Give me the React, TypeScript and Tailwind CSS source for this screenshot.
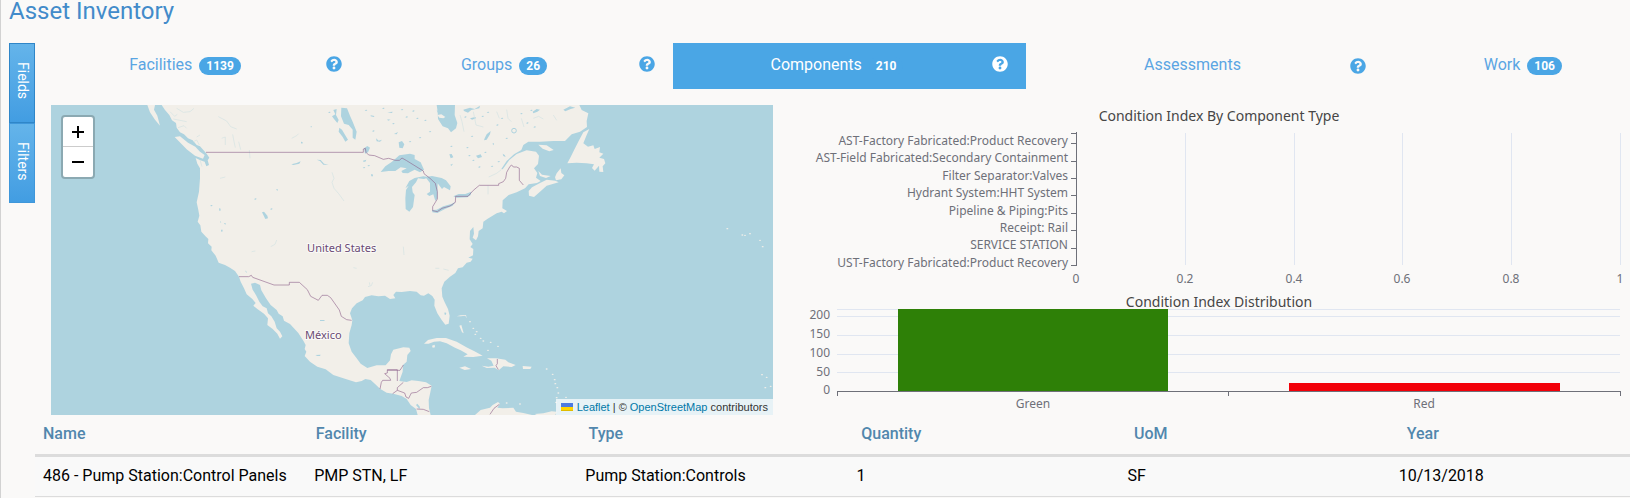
import { FaQuestionCircle } from "react-icons/fa";

const tabs = [
  { label: "Facilities", count: 1139, width: "flex-[325_1_0%] justify-center", link: "mr-[25px]", icon: "top-[13px]" },
  { label: "Groups", count: 26, width: "flex-[313_1_0%] justify-center", link: "mr-[25px]", icon: "top-[13px]" },
  { label: "Components", count: 210, width: "flex-[353_1_0%] justify-center", link: "mr-[25px]", icon: "top-[13px]", active: true },
  { label: "Assessments", width: "flex-[358_1_0%] justify-center", link: "mr-[25px]", icon: "top-[15px]" },
  { label: "Work", count: 106, width: "flex-[246_1_0%] justify-end", link: "mr-[68px]" },
];

const land = [
  // North America
  "M365,30 375,45 388,60 396,76 408,84 410,98 420,112 432,118 444,130 458,136 470,150 480,154 490,165 500,176 508,188 503,196 507,210 499,214 494,200 481,196 467,189 472,206 480,220 480,250 477,290 470,322 475,345 478,362 473,380 481,391 484,410 498,425 505,432 504,445 515,455 514,466 527,482 536,503 555,510 570,518 585,528 597,545 602,560 612,580 620,598 637,612 647,624 640,632 652,642 672,656 684,670 682,690 698,702 712,716 720,731 727,724 720,710 710,700 704,680 694,664 684,655 680,640 668,634 658,620 649,602 638,584 633,566 645,563 660,570 664,586 678,610 692,630 710,645 716,656 728,664 732,677 750,687 775,714 790,737 797,750 794,762 799,770 794,783 810,800 832,815 857,823 880,840 910,850 948,862 965,858 976,852 992,855 1006,868 1020,881 1040,893 1060,896 1085,903 1100,912 1112,930 1128,942 1133,960 1172,960 1167,940 1166,915 1171,892 1175,872 1158,862 1135,858 1115,856 1100,861 1078,858 1088,830 1089,810 1100,800 1102,780 1112,768 1108,758 1090,757 1060,764 1053,778 1050,796 1037,811 1010,811 982,819 962,806 950,790 935,770 926,745 928,715 935,690 937,676 930,655 936,640 950,625 968,616 975,606 995,601 1015,604 1035,602 1050,612 1066,610 1060,600 1068,590 1085,591 1110,588 1130,590 1142,601 1152,602 1165,595 1177,603 1184,614 1183,632 1192,655 1205,675 1216,689 1226,686 1229,662 1224,642 1214,622 1207,605 1205,580 1213,560 1230,545 1246,534 1254,520 1268,517 1280,503 1292,500 1298,491 1285,488 1299,481 1300,462 1291,456 1298,447 1289,433 1290,408 1300,396 1302,416 1298,428 1308,436 1314,424 1316,408 1328,400 1330,380 1343,371 1370,355 1385,350 1392,355 1401,348 1387,340 1388,316 1406,300 1430,292 1455,280 1466,268 1491,264 1502,258 1488,248 1492,234 1482,220 1494,207 1497,182 1488,170 1460,166 1430,177 1408,195 1388,223 1384,222 1400,198 1422,178 1444,165 1450,150 1465,140 1500,140 1540,138 1575,138 1595,118 1620,110 1641,96 1640,78 1645,55 1625,45 1618,30 1245,30 1244,60 1252,84 1248,100 1233,112 1224,100 1208,94 1194,72 1193,50 1190,30Z",
  // Nova Scotia, Cape Breton, Prince Edward Island
  "M1466,288 1476,277 1500,264 1520,254 1546,257 1556,262 1520,272 1500,290 1482,306 1467,302Z",
  "M1545,247 1550,235 1562,220 1564,234 1573,241 1564,253 1548,256Z",
  "M1495,228 1506,239 1532,243 1518,249 1500,243Z",
  // Newfoundland, Anticosti
  "M1582,205 1592,186 1602,166 1616,138 1630,112 1648,102 1640,120 1630,145 1644,155 1660,151 1664,162 1680,156 1678,172 1690,176 1678,188 1692,192 1696,205 1688,214 1690,231 1678,230 1677,212 1664,227 1656,219 1662,208 1640,205 1610,203Z",
  "M1495,149 1520,151 1541,165 1528,169 1508,161Z",
  // Vancouver Island, Haida Gwaii
  "M404,126 420,124 444,143 466,155 480,170 494,180 489,191 465,182 440,163 418,140Z",
  "M322,30 345,30 342,44 352,62 360,92 345,74 330,52Z",
  // Cuba, Hispaniola, Jamaica, Puerto Rico
  "M1152,746 1164,735 1190,729 1218,729 1250,740 1282,758 1302,768 1328,782 1300,786 1270,785 1283,778 1262,766 1245,758 1220,745 1200,739 1182,740 1166,746Z",
  "M1325,812 1345,815 1361,812 1354,797 1341,790 1368,790 1396,794 1405,802 1427,810 1415,816 1390,814 1376,826 1364,818 1340,819Z",
  "M1258,818 1275,814 1293,822 1274,825Z",
  "M1448,813 1475,815 1471,822 1449,822Z",
  "M1176,752 1184,749 1185,757 1178,758Z",
  // Bahamas
  "M1258,692 1264,690 1271,715 1266,712Z M1250,664 1262,661 1278,660 1280,670 1276,662 1262,664Z",
  // South America
  "M1305,960 1322,945 1350,938 1358,930 1374,921 1380,926 1372,938 1388,940 1420,938 1428,950 1450,954 1476,960Z",
  "M1484,957 1510,955 1535,949 1550,950 1546,960 1490,960Z",
];

const water = [
  // Great Lakes
  "M1022,231 1036,214 1056,200 1078,181 1110,176 1124,180 1124,192 1142,202 1152,224 1140,232 1124,224 1112,230 1104,235 1088,234 1084,228 1100,220 1082,217 1066,228 1046,228Z",
  "M1096,310 1098,285 1106,272 1096,280 1108,258 1124,249 1150,244 1168,247 1152,252 1134,250 1128,262 1116,276 1118,292 1124,300 1119,336 1108,350 1097,342Z",
  "M1156,246 1176,243 1205,249 1218,256 1232,274 1230,286 1212,276 1206,282 1193,265 1192,310 1186,318 1180,298 1168,303 1160,297 1170,290 1170,264Z",
  "M1176,345 1190,344 1210,334 1236,326 1246,320 1238,332 1215,342 1192,354 1177,352Z",
  "M1240,304 1256,297 1276,297 1294,290 1292,300 1282,307 1250,308Z",
  // Manitoba
  "M904,38 921,40 930,62 938,80 950,110 946,134 938,128 938,104 926,90 912,86 903,64Z",
  "M880,45 890,42 888,60 896,75 892,84 882,72 876,64 886,58Z",
  "M898,98 906,104 914,118 924,134 916,140 908,126 896,110Z",
  "M1076,142 1086,138 1093,148 1088,160 1078,158Z",
  "M972,160 982,153 990,158 984,172 975,176Z",
  // Great Salt Lake and other inland water
  "M666,352 672,350 682,362 684,370 676,372Z",
  "M537,340 542,341 541,348 538,347Z M552,384 557,384 556,390Z M543,404 548,404 547,410 544,410Z M708,283 714,283 712,288Z M614,526 620,530 620,534Z M540,379 544,381 541,383Z",
  "M826,780 842,779 840,783 832,783Z M840,675 854,675 853,678 840,678Z",
  "M1214,652 1219,654 1217,660 1213,658Z",
  "M1334,130 1340,118 1352,108 1350,118 1340,134 1332,136Z M1308,182 1322,178 1326,186 1314,190Z",
  "M1228,178 1235,177 1240,187 1232,190Z M1231,209 1239,206 1234,213Z M1388,176 1394,180 1397,186 1390,183Z M1357,146 1362,144 1361,151Z",
  "M1270,44 1290,38 1304,42 1320,32 1318,40 1294,45 1284,53 1272,48Z M1290,70 1306,66 1308,70 1296,74Z M1478,50 1490,42 1500,44 1492,50 1480,55Z M1570,44 1590,34 1606,38 1592,42 1576,49Z",
  "M992,61 1003,63 1002,66 992,64Z M1042,52 1058,50 1056,54Z M1008,130 1016,137 1026,134 1020,140 1010,139Z M1062,117 1074,111 1070,118Z M969,197 979,194 976,200 970,200Z M993,238 998,238 999,244 994,244Z M1042,73 1052,74 1044,77Z",
  "M754,208 770,204 782,199 778,206 760,210Z M830,194 842,195 852,206 866,209 850,209 840,198Z M783,140 788,141 787,146 783,145Z M812,94 815,93 815,97 812,97Z",
  // Lake Nicaragua
  "M1128,930 1132,926 1140,936 1138,942Z",
];

const creeks = [
  "M414,98 432,92 440,100 M390,50 404,64 412,58 M410,40 430,52 450,50 462,40 M400,72 440,80 M460,140 470,135 478,150 M470,126 480,120",
  "M535,65 560,78 572,95 590,102 M545,130 556,126 556,150 M578,118 582,140 586,158 M596,140 602,164 M628,165 630,190",
  "M755,130 770,122 776,116 M876,232 882,250 876,262 882,280 896,296 912,318 M692,455 705,448 710,435 M635,470 646,468",
  "M480,195 486,215 M540,250 556,246 M1090,455 1092,480 M984,575 994,572 998,562 M988,562 990,572 M940,518 950,520",
  "M1344,272 1344,298 M1346,246 1370,235 1384,224 M1186,520 1198,520 M1210,522 1226,526",
  "M1260,60 1266,80 1272,110 M1300,50 1308,90 1330,96 M1400,44 1404,70 1414,80 M1444,70 1452,96 M1370,50 1378,70 M1480,70 1496,64 1510,72 M1540,60 1550,76",
];

const lakes: [number, number][] = [
  [1120, 48], [1132, 70], [1100, 66], [1156, 76], [1170, 110], [1140, 128], [1086, 44], [1110, 140],
  [1276, 66], [1296, 124], [1328, 64], [1344, 52], [1372, 90], [1386, 70], [1400, 130],
  [1234, 154], [1282, 158], [1300, 196], [1336, 172], [1376, 200], [1288, 182],
  [1444, 56], [1462, 84], [1474, 46], [1484, 96], [1356, 214], [1318, 216],
  [1000, 108], [978, 46], [1030, 40], [1060, 86], [986, 212], [972, 218], [868, 52], [646, 312], [514, 332], [694, 342],
];

const borders = [
  "M498,172H970V162L976,160 978,172 986,180 1004,182 1030,193 1046,190 1066,196 1078,196 1086,189 1100,197 1150,228 1152,236 1170,250 1186,265 1192,290 1192,312 1178,335 1178,347 1192,350 1206,340 1230,333 1246,322 1247,304H1284L1300,286 1318,271H1376V266L1390,260 1397,250 1400,232 1410,214 1415,210 1420,216H1430L1438,220V256L1450,270",
  "M597,545H626L634,541 638,547 702,570H748V562H778L802,584 812,604 835,616 846,601H862L872,608 898,645 904,664 920,674 935,676",
  "M1020,882 1024,862 1028,856H1052L1050,850 1034,836 1042,834V824H1072V858 M1042,826H1080L1090,810 M1090,862 1072,878 1072,886 1058,896 M1072,886 1094,894 1098,906 1106,910 1114,894 1130,892 1150,878H1162L1174,874 M1130,942 1150,943 1168,950",
  "M1372,792V806L1368,812 1375,824 M1378,928 1362,940 1350,958",
];

const islets: [number, number][] = [
  [2062, 401], [2107, 420], [2115, 421], [2130, 416], [2160, 436], [2168, 455], [2166, 839], [2180, 847], [2176, 878], [2192, 874],
  [1520, 822], [1538, 838], [1544, 854], [1546, 866], [1552, 878], [1555, 894], [1550, 908], [1548, 922], [1578, 907],
  [1300, 700], [1310, 710], [1322, 730], [1330, 738], [1352, 742], [1374, 754], [1344, 766],
  [1290, 680], [1306, 718], [1400, 924], [1440, 927],
];

function MapPanel() {
  return (
    <section aria-label="Asset map" className="relative h-[310px] min-w-0 flex-[722_1_0%] overflow-hidden bg-[#aed3df]">
      <svg className="block h-full w-full" viewBox="33 30 2166 930" preserveAspectRatio="xMidYMid slice" role="img" aria-label="Map of North America">
        <g fill="#f2efe9">
          {land.map((d) => <path key={d} d={d} />)}
          {islets.map(([x, y]) => <ellipse key={`${x}-${y}`} cx={x} cy={y} rx="3" ry="2" />)}
        </g>
        <g fill="#aed3df">
          {water.map((d) => <path key={d} d={d} />)}
          {lakes.map(([x, y]) => <path key={`${x}-${y}`} d={`M${x - 4},${y + 1}l4,-3 4,1 -3,3Z`} />)}
          <path d="M1190,44 1198,52 1206,60 1218,64 1214,72 1200,70Z" />
        </g>
        <path d="M1192,60 1204,58 1216,66 1210,70 1198,68Z" fill="#f2efe9" />
        <circle cx="1422" cy="107" r="7" fill="none" stroke="#aed3df" strokeWidth="3" />
        <g fill="none" stroke="#d3e2e2" strokeWidth="2">
          {creeks.map((d) => <path key={d} d={d} />)}
        </g>
        <g fill="none" stroke="#8d618b" strokeOpacity="0.6" strokeWidth="3">
          {borders.map((d) => <path key={d} d={d} />)}
        </g>
        <g fontFamily="'Noto Sans', sans-serif" fontSize="33" fill="#6b4a74" stroke="#fff" strokeOpacity="0.7" strokeWidth="6" paintOrder="stroke" textAnchor="middle">
          <text x="905" y="470">United States</text>
          <text x="850" y="733">México</text>
        </g>
      </svg>
      <div className="absolute top-[10px] left-[10px] flex flex-col rounded-[4px] border-2 border-[#8ba9b2] bg-white">
        <button aria-label="Zoom in" className="flex h-[30px] w-[30px] items-center justify-center border-b border-[#ccc]">
          <svg width="12" height="12" viewBox="0 0 12 12" stroke="#000" strokeWidth="2"><path d="M0 6h12M6 0v12" /></svg>
        </button>
        <button aria-label="Zoom out" className="flex h-[30px] w-[30px] items-center justify-center">
          <svg width="12" height="12" viewBox="0 0 12 12" stroke="#000" strokeWidth="2"><path d="M0 6h12" /></svg>
        </button>
      </div>
      <div className="absolute right-0 bottom-0 flex h-4 items-center gap-1 bg-white/70 px-[5px] font-['Liberation_Sans',sans-serif] text-[11px] whitespace-nowrap text-[#333]">
        <svg width="12" height="8" viewBox="0 0 12 8" aria-hidden="true"><path fill="#4c7be1" d="M0 0h12v4H0z" /><path fill="#ffd500" d="M0 4h12v3H0z" /><path fill="#e0bc00" d="M0 7h12v1H0z" /></svg>
        <span><a href="#leaflet" className="text-[#0078a8]">Leaflet</a> | © <a href="#osm" className="text-[#0078a8]">OpenStreetMap</a> contributors</span>
      </div>
    </section>
  );
}

const componentTypes = [
  "AST-Factory Fabricated:Product Recovery",
  "AST-Field Fabricated:Secondary Containment",
  "Filter Separator:Valves",
  "Hydrant System:HHT System",
  "Pipeline & Piping:Pits",
  "Receipt: Rail",
  "SERVICE STATION",
  "UST-Factory Fabricated:Product Recovery",
];
const labelY = [40, 57, 75, 92, 110, 127, 144, 162];
const tickY = [28, 38, 56, 73, 90, 108, 125, 143, 160];
const scaleX = [
  { x: 287, label: "0" }, { x: 396, label: "0.2" }, { x: 505, label: "0.4" },
  { x: 613, label: "0.6" }, { x: 722, label: "0.8" }, { x: 831, label: "1" },
];
const scaleY = [
  { text: 214, label: "200" }, { text: 233, label: "150" }, { text: 252, label: "100" },
  { text: 271, label: "50" }, { text: 289, label: "0" },
];

function Charts() {
  return (
    <section aria-label="Condition charts" className="min-w-0 flex-[841_1_0%]">
      <svg className="block w-full" viewBox="0 0 841 310" fontFamily="'Noto Sans', sans-serif" fontSize="12" fill="#6e7079">
        <text x="430" y="16" textAnchor="middle" fontSize="14" fill="#464646">Condition Index By Component Type</text>
        <g shapeRendering="crispEdges" strokeWidth="1">
          {scaleX.slice(1).map((s) => <path key={s.x} d={`M${s.x}.5 28V160`} stroke="#e0e6f1" />)}
          <path d="M287.5 27V161" stroke="#6e7079" />
          {tickY.map((y) => <path key={y} d={`M282 ${y}.5H287`} stroke="#6e7079" />)}
        </g>
        {componentTypes.map((t, i) => <text key={t} x="279" y={labelY[i]} textAnchor="end">{t}</text>)}
        {scaleX.map((s) => <text key={s.label} x={s.x} y="178" textAnchor="middle">{s.label}</text>)}

        <g shapeRendering="crispEdges" strokeWidth="1">
          {[204, 211, 230, 249, 267].map((y) => <path key={y} d={`M48 ${y}.5H831`} stroke="#e0e6f1" />)}
          <path d="M109 204H379V286H109z" fill="#2e8007" />
          <path d="M500 278H771V286H500z" fill="#f20008" />
          <path d="M48 286.5H832M48.5 287V291M439.5 287V291M831.5 287V291" stroke="#6e7079" />
        </g>
        <text x="430" y="202" textAnchor="middle" fontSize="14" fill="#464646">Condition Index Distribution</text>
        {scaleY.map((s) => <text key={s.label} x="41" y={s.text} textAnchor="end">{s.label}</text>)}
        <text x="244" y="303" textAnchor="middle">Green</text>
        <text x="635" y="303" textAnchor="middle">Red</text>
      </svg>
    </section>
  );
}

const columns = ["Name", "Facility", "Type", "Quantity", "UoM", "Year"];
const row = ["486 - Pump Station:Control Panels", "PMP STN, LF", "Pump Station:Controls", "1", "SF", "10/13/2018"];

function AssetTable() {
  return (
    <table className="block w-full text-left text-[16px] leading-6">
      <thead className="block">
        <tr className="flex border-b-[3px] border-[#dcdcdc] pt-[7px] pb-2">
          {columns.map((c) => <th key={c} className="w-[17.1%] shrink-0 pl-2 font-medium text-[#5187ad] last:shrink">{c}</th>)}
        </tr>
      </thead>
      <tbody className="block">
        <tr className="flex border-b border-[#dcdcdc] bg-[#f9f9f9] pt-[7px] pb-2 text-black">
          {row.map((c) => <td key={c} className="w-[17%] shrink-0 pl-2 whitespace-nowrap last:shrink">{c}</td>)}
        </tr>
      </tbody>
    </table>
  );
}

export default function App() {
  return (
    <main className="min-h-screen overflow-hidden border-l border-[#d2d2d2] bg-[#faf9f8] font-[Roboto,sans-serif]">
      <h1 className="pl-2 text-[24px] leading-[22px] text-[#428bca]">Asset Inventory</h1>
      <div className="mt-[21px] flex pl-2">
        <div className="flex w-[26px] shrink-0 flex-col text-[14px] text-white">
          <button className="flex h-20 items-center justify-center border border-[#2f86c8] bg-gradient-to-b from-[#64b4ea] to-[#429de2] pb-1 [writing-mode:vertical-rl]">Fields</button>
          <button className="flex h-20 items-center justify-center border border-[#3f97da] bg-gradient-to-b from-[#64b4ea] to-[#429de2] pb-1 [writing-mode:vertical-rl]">Filters</button>
        </div>
        <div className="min-w-0 flex-1">
          <nav className="flex h-[46px]">
            {tabs.map((t) => (
              <div key={t.label} className={`relative flex min-w-0 ${t.width} ${t.active ? "bg-[#4aa6e5] text-white" : "text-[#5aa5e3]"}`}>
                <a href={`#${t.label.toLowerCase()}`} className={`flex h-11 items-center gap-[7px] text-[16px] ${t.link}`}>
                  {t.label}
                  {t.count && <span className="mt-px rounded-full bg-[#4aa6e5] px-[7px] text-[12px] leading-[18px] font-bold text-white">{t.count}</span>}
                </a>
                {t.icon && (
                  <button aria-label={`About ${t.label}`} className={`absolute right-[18px] ${t.icon} ${t.active ? "text-white" : "text-[#4aa6e5]"}`}>
                    <FaQuestionCircle size={16} />
                  </button>
                )}
              </div>
            ))}
          </nav>
          <div className="mt-4 flex items-start gap-4 pl-4">
            <MapPanel />
            <Charts />
          </div>
          <AssetTable />
        </div>
      </div>
    </main>
  );
}
